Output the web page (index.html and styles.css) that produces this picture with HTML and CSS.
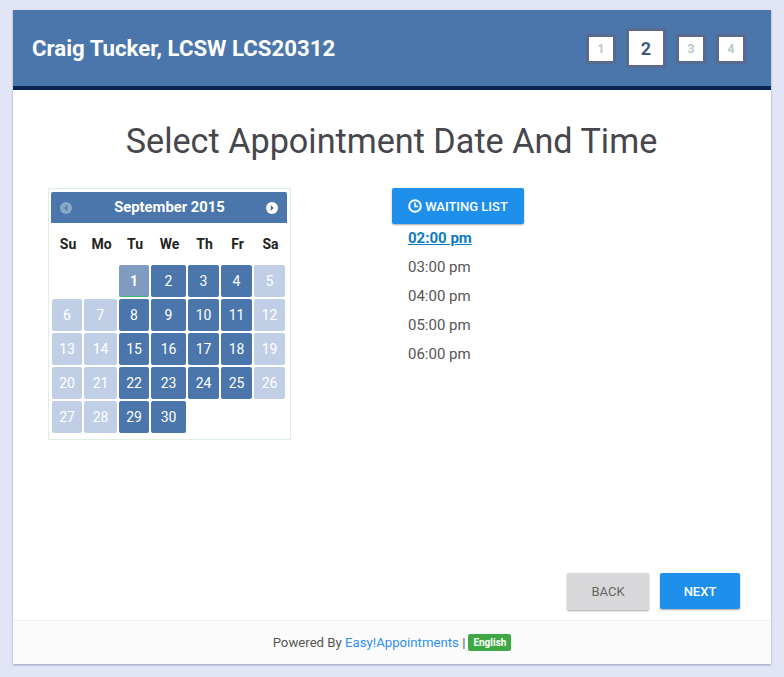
FILE: index.html
```html
<!DOCTYPE html>
<html>
<head lang="en">
    <meta charset="UTF-8">
    <title>Select Appointment Date And Time</title>
    <link rel="stylesheet" href="styles.css">
</head>
<body>
<div class="frame">
    <div class="head">
        <div class="provider">Craig Tucker, LCSW LCS20312</div>
        <div class="steps">
            <div class="step">1</div>
            <div class="step current">2</div>
            <div class="step">3</div>
            <div class="step">4</div>
        </div>
    </div>

    <div class="main">
        <h2 class="title">Select Appointment Date And Time</h2>
        <div class="columns">
            <div class="picker">
                <div class="cal-head">
                    <span class="arrow off"><svg width="12" height="12" viewBox="0 0 12 12"><circle cx="6" cy="6" r="6" fill="#fff"/><path d="M7.4 3 4.2 6l3.2 3z" fill="#4a76ab"/></svg></span>
                    <span class="month">September 2015</span>
                    <span class="arrow"><svg width="12" height="12" viewBox="0 0 12 12"><circle cx="6" cy="6" r="6" fill="#fff"/><path d="M4.6 3 7.8 6 4.6 9z" fill="#4a76ab"/></svg></span>
                </div>
                <div class="cal-grid names">
                    <div>Su</div><div>Mo</div><div>Tu</div><div>We</div><div>Th</div><div>Fr</div><div>Sa</div>
                </div>
                <div class="cal-grid days">
                    <div class="blank"></div><div class="blank"></div>
                    <div class="day today">1</div><div class="day">2</div><div class="day">3</div><div class="day">4</div><div class="day off">5</div>
                    <div class="day off">6</div><div class="day off">7</div><div class="day">8</div><div class="day">9</div><div class="day">10</div><div class="day">11</div><div class="day off">12</div>
                    <div class="day off">13</div><div class="day off">14</div><div class="day">15</div><div class="day">16</div><div class="day">17</div><div class="day">18</div><div class="day off">19</div>
                    <div class="day off">20</div><div class="day off">21</div><div class="day">22</div><div class="day">23</div><div class="day">24</div><div class="day">25</div><div class="day off">26</div>
                    <div class="day off">27</div><div class="day off">28</div><div class="day">29</div><div class="day">30</div>
                </div>
            </div>

            <div class="hours">
                <a class="btn wait" href="#">
                    <svg width="14" height="14" viewBox="0 0 14 14" fill="none" stroke="#fff"><circle cx="7" cy="7" r="5.8" stroke-width="2"/><path d="M7 3.6V7.4H10" stroke-width="1.6"/></svg>
                    WAITING LIST
                </a>
                <ul class="times">
                    <li class="picked">02:00 pm</li>
                    <li>03:00 pm</li>
                    <li>04:00 pm</li>
                    <li>05:00 pm</li>
                    <li>06:00 pm</li>
                </ul>
            </div>
        </div>
        <div class="actions">
            <a class="btn back" href="#">BACK</a>
            <a class="btn next" href="#">NEXT</a>
        </div>
    </div>

    <div class="foot">
        <span>Powered By <a href="#">Easy!Appointments</a> |</span>
        <span class="lang">English</span>
    </div>
</div>
</body>
</html>
```

FILE: styles.css
```css
*{padding: 0;margin: 0;box-sizing: border-box;list-style: none;}
html,body{height: 100%;}
body{background: #e2e5f6;font-family: Roboto, "Liberation Sans", sans-serif;}
a{text-decoration: none;}

.frame{width: 758px;height: 654px;margin: 10px 13px 0;background: #fff;display: flex;flex-direction: column;box-shadow: 0 1px 2px rgba(90,90,130,.5);}

.head{height: 80px;flex: none;background: #4a76ab;border-bottom: 4px solid #0a2350;display: flex;align-items: center;justify-content: space-between;padding: 0 25px 0 19px;}
.provider{color: #fff;font-size: 22.2px;font-weight: 700;}
.steps{display: flex;align-items: center;gap: 10px;margin-top: 2px;}
.step{width: 30px;height: 30px;background: #fff;border: 3px solid #586a90;color: #b4cac8;font-size: 12px;font-weight: 700;display: flex;align-items: center;justify-content: center;}
.step.current{width: 40px;height: 40px;color: #3d5a80;font-size: 18px;margin-top: -2px;}

.main{flex: 1;display: flex;flex-direction: column;padding: 32px 31px 10px 35px;}
.title{font-size: 34.2px;font-weight: 400;color: #46464c;text-align: center;line-height: 39px;margin-left: -5px;}
.columns{display: flex;margin-top: 27px;}

.picker{width: 243px;height: 252px;border: 1px solid #dcefe0;padding: 3px 2px;}
.cal-head{height: 31px;margin: 0 1px 0 0;background: #4a76ab;border-radius: 2px 2px 0 0;display: flex;align-items: center;justify-content: space-between;padding: 0 9px;color: #fff;}
.month{font-size: 14.8px;font-weight: 700;margin: -2px 0 0 1px;}
.arrow{display: flex;}
.arrow.off{opacity: .35;}
.cal-grid{display: grid;grid-template-columns: 30px 33px 30px 35px 31px 31px 31px;column-gap: 2px;margin-left: 1px;}
.names{height: 42px;align-items: center;font-size: 14px;font-weight: 700;color: #222;text-align: center;padding-left: 1px;}
.days{grid-auto-rows: 32px;row-gap: 2px;}
.day{background: #4a76ab;color: #fff;font-size: 14px;font-weight: 400;border-radius: 2px;display: flex;align-items: center;justify-content: center;}
.day.off{background: #c1cfe6;}
.day.today{background: #7f9cc0;border-bottom: 1px solid #3fb56b;font-weight: 700;}

.hours{margin-left: 101px;}
.btn{display: flex;align-items: center;justify-content: center;color: #fff;font-size: 13px;font-weight: 500;border-radius: 2px;box-shadow: 0 1px 2px rgba(0,0,0,.35);}
.wait{width: 132px;height: 36px;background: #1e90ec;gap: 3px;}
.times{margin-left: 16px;font-size: 15px;color: #555;line-height: 29px;}
.times .picked{color: #0d7bc4;font-weight: 700;text-decoration: underline;}

.actions{margin-top: auto;display: flex;justify-content: flex-end;gap: 11px;}
.back{width: 82px;height: 37px;background: #d8d7da;color: #666;font-weight: 400;}
.next{width: 80px;height: 36px;background: #1e90ec;}

.foot{height: 44px;flex: none;background: #fbfbfc;border-top: 1px solid #eceef0;display: flex;align-items: center;justify-content: center;gap: 3px;font-size: 13.2px;color: #555;}
.foot a{color: #2f8fec;}
.lang{background: #3fa845;color: #fff;font-size: 10px;font-weight: 700;padding: 3px 5px;border-radius: 2px;}
```
